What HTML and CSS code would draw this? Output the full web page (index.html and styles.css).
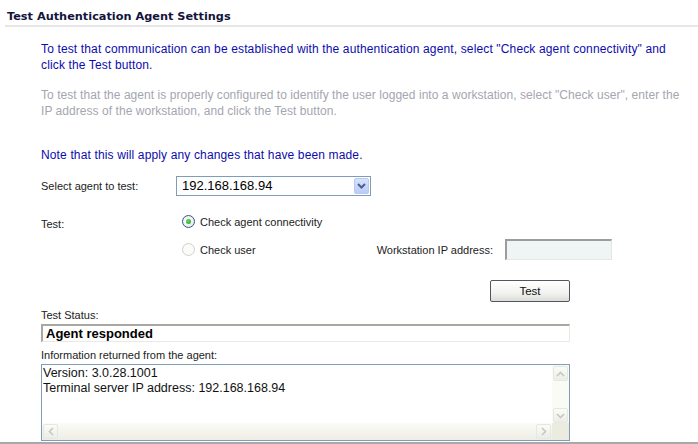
FILE: index.html
```html
<!DOCTYPE html>
<html>
<head>
<meta charset="utf-8">
<link rel="stylesheet" href="styles.css">
</head>
<body>
<div class="header"><h1 class="title">Test Authentication Agent Settings</h1></div>
<div class="content">
  <p class="blue p1">To test that communication can be established with the authentication agent, select "Check agent connectivity" and click the Test button.</p>
  <p class="gray p2">To test that the agent is properly configured to identify the user logged into a workstation, select "Check user", enter the IP address of the workstation, and click the Test button.</p>
  <p class="blue note">Note that this will apply any changes that have been made.</p>

  <div class="row select-row">
    <span class="label">Select agent to test:</span>
    <div class="select">
      <span class="select-text">192.168.168.94</span>
      <span class="select-btn"><svg width="9" height="6" viewBox="0 0 9 6"><path d="M1 1 L4.5 4.5 L8 1" fill="none" stroke="#4d6185" stroke-width="2"/></svg></span>
    </div>
  </div>

  <div class="row test-row">
    <span class="label">Test:</span>
    <div class="radios">
      <div class="radio-line"><span class="radio checked"></span><span class="rlabel">Check agent connectivity</span></div>
      <div class="radio-line"><span class="radio off"></span><span class="rlabel">Check user</span>
        <span class="ws-label">Workstation IP address:</span><span class="ws-input"></span></div>
    </div>
  </div>

  <div class="btn-row"><span class="button">Test</span></div>

  <div class="small-label status-label">Test Status:</div>
  <div class="status-box">Agent responded</div>
  <div class="small-label info-label">Information returned from the agent:</div>
  <div class="textarea">
    <div class="ta-text">Version: 3.0.28.1001<br>Terminal server IP address: 192.168.168.94</div>
    <div class="vscroll">
      <span class="sbtn"><svg width="9" height="6" viewBox="0 0 9 6"><path d="M1 5 L4.5 1.5 L8 5" fill="none" stroke="#c4c8c0" stroke-width="1.6"/></svg></span>
      <span class="sbtn"><svg width="9" height="6" viewBox="0 0 9 6"><path d="M1 1 L4.5 4.5 L8 1" fill="none" stroke="#c4c8c0" stroke-width="1.6"/></svg></span>
    </div>
    <div class="hscroll">
      <span class="sbtn"><svg width="6" height="9" viewBox="0 0 6 9"><path d="M5 1 L1.5 4.5 L5 8" fill="none" stroke="#c4c8c0" stroke-width="1.6"/></svg></span>
      <span class="sbtn"><svg width="6" height="9" viewBox="0 0 6 9"><path d="M1 1 L4.5 4.5 L1 8" fill="none" stroke="#c4c8c0" stroke-width="1.6"/></svg></span>
    </div>
    <div class="corner"></div>
  </div>
</div>
<div class="bottom-line"></div>
</body>
</html>
```
FILE: styles.css
```css
html, body { margin: 0; padding: 0; background: #fff; }
body { width: 698px; height: 444px; overflow: hidden; position: relative; font-family: "Liberation Sans", Arial, sans-serif; }

.header { padding: 10px 0 0 5px; }
.title {
  margin: 0; padding: 0 0 2px 2px;
  font-family: "DejaVu Sans", Verdana, sans-serif; font-weight: bold; font-size: 11.3px;
  color: #14143c; line-height: 13px;
  border-bottom: 2px solid #e6e6e6;
}

.content { padding-left: 41px; }
p { margin: 0; font-size: 12px; line-height: 16px; letter-spacing: 0.14px; }
.blue { color: #0c0cac; }
.gray { color: #a4a6b0; }
.p1 { margin-top: 14px; width: 645px; }
.p2 { margin-top: 14px; width: 650px; letter-spacing: 0.05px; }
.note { margin-top: 28px; }

.row { display: flex; }
.label { width: 135px; font-size: 11px; color: #222; }
.select-row { margin-top: 12px; align-items: center; height: 21px; }
.select {
  width: 193px; height: 18px; border: 1px solid #7f9db9; display: flex; align-items: center;
  justify-content: space-between;
}
.select-text { font-size: 13px; color: #000; padding-left: 5px; }
.select-btn {
  width: 15px; height: 16px; margin-right: 1px; border: 1px solid #b9c9ef; border-radius: 2px;
  background: linear-gradient(#d6e2fd, #b9cdfa); display: flex; align-items: center; justify-content: center;
  box-sizing: border-box;
}

.test-row { margin-top: 19px; }
.test-row .label { padding-top: 3px; }
.radios { display: flex; flex-direction: column; gap: 15px; padding-left: 6px; }
.radio-line { display: flex; align-items: center; height: 13px; }
.radio {
  width: 13px; height: 13px; border-radius: 50%; box-sizing: border-box; margin-right: 5px; position: relative;
}
.radio.checked { border: 1px solid #2b5c8c; background: radial-gradient(circle at 40% 40%, #fff, #e2e2dc); }
.radio.checked::after {
  content: ""; position: absolute; left: 3px; top: 3px; width: 5px; height: 5px; border-radius: 50%;
  background: radial-gradient(circle at 40% 40%, #6ad46a, #21a121);
}
.radio.off { border: 1px solid #d0d0cc; background: #fbfbf8; }
.rlabel { font-size: 11px; color: #222; }
.ws-label { font-size: 11px; color: #222; margin-left: 121px; }
.ws-input {
  margin-left: 12px; background: #eff4f4;
  border-top: 2px solid #9c9c9c; border-left: 2px solid #9c9c9c;
  border-right: 1px solid #e4e8e4; border-bottom: 1px solid #e4e8e4;
  width: 104px; height: 18px;
}

.btn-row { margin-top: 24px; padding-left: 449px; height: 22px; }
.button {
  display: flex; align-items: center; justify-content: center; width: 78px; height: 20px;
  border: 1px solid #55555f; border-radius: 2px;
  background: linear-gradient(#ffffff, #f2f2f0 60%, #dcdcd8);
  font-size: 11.5px; color: #111;
}

.small-label { font-size: 11px; color: #222; line-height: 13px; }
.status-label { margin-top: 7px; }
.status-box {
  margin-top: 2px; width: 523px; height: 15px;
  border: 1px solid #eceae0; border-top: 2px solid #a8a8a0; border-left: 2px solid #a8a8a0;
  font-weight: bold; font-size: 13px; line-height: 15px; padding-left: 3px; color: #000;
}
.info-label { margin-top: 7px; }
.textarea {
  margin-top: 2px; width: 527px; height: 75px; border: 1px solid #7f9db9; position: relative; background: #fff;
}
.ta-text { font-size: 12.5px; line-height: 15px; color: #111; padding: 1px 0 0 1px; }
.vscroll {
  position: absolute; right: 0; top: 0; width: 17px; height: 58px; background: #fbfbf6;
  display: flex; flex-direction: column; justify-content: space-between; align-items: center; padding-top: 1px;
  box-sizing: border-box;
}
.hscroll {
  position: absolute; left: 0; bottom: 0; width: 510px; height: 17px;
  background: linear-gradient(#fbfbf7, #eeede5);
  display: flex; justify-content: space-between; align-items: center; padding: 0 1px;
  box-sizing: border-box;
}
.sbtn {
  width: 15px; height: 15px; box-sizing: border-box; border: 1px solid #e6e8e0; border-radius: 2px;
  background: linear-gradient(#fbfbf8, #ecede6); display: flex; align-items: center; justify-content: center;
}
.corner { position: absolute; right: 0; bottom: 0; width: 17px; height: 17px; background: #ecebdf; }

.bottom-line { position: absolute; left: 0; right: 0; top: 442px; height: 2px; background: #a8a8a8; }
```
